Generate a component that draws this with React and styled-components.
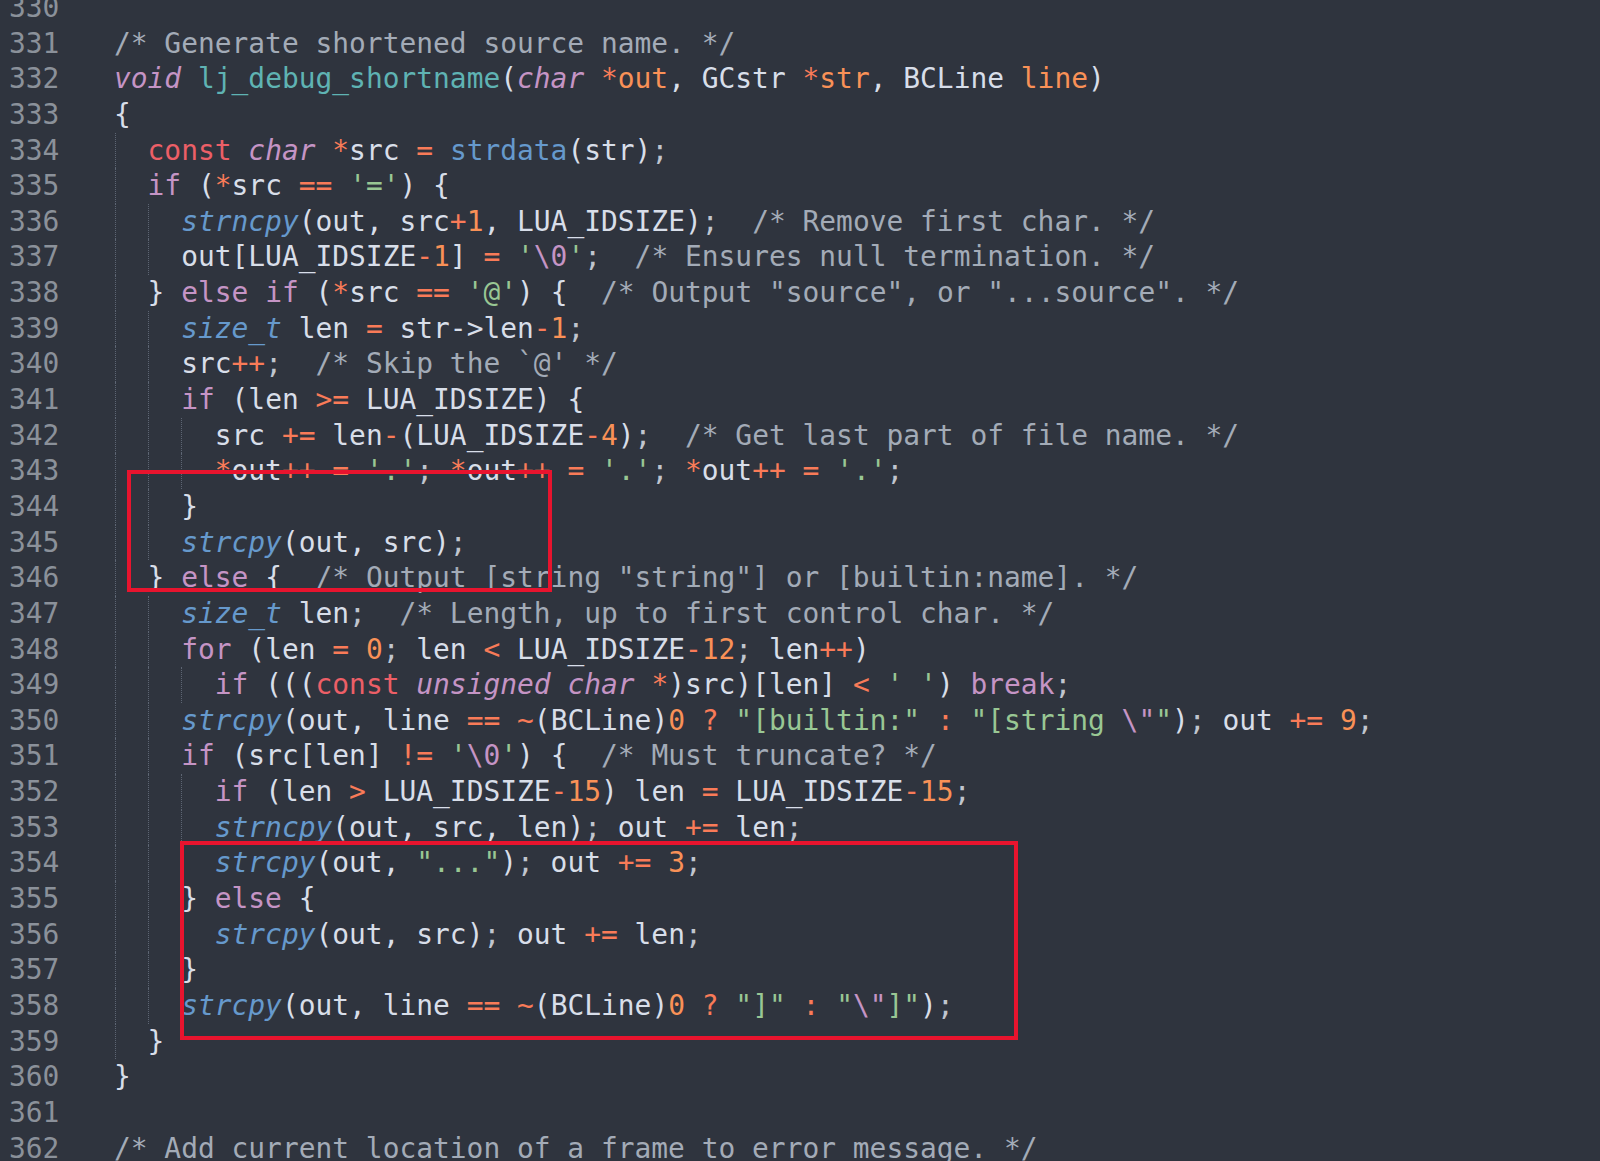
import React from 'react';
import styled, { createGlobalStyle } from 'styled-components';

const LH = 35.65;

const Global = createGlobalStyle`
  html, body { margin: 0; padding: 0; background: #2f343e; overflow: hidden; height: 100%; }
  #root { height: 100%; }
`;

const Page = styled.div`
  position: relative;
  width: 1600px;
  height: 1161px;
  overflow: hidden;
  background: #2f343e;
  font-family: "DejaVu Sans Mono", monospace;
  font-size: 27.9px;
`;

const Lines = styled.div`
  display: flex;
  flex-direction: column;
  margin-top: -10px;
`;

const Row = styled.div`
  display: flex;
  height: ${LH}px;
  line-height: ${LH}px;
`;

const Gutter = styled.div`
  flex: 0 0 114px;
  box-sizing: border-box;
  padding-left: 9px;
  color: #8b919a;
`;

const Code = styled.div`
  white-space: pre;
  color: #d8dee9;
`;

const Indent = styled.span`
  display: inline-block;
  vertical-align: top;
  box-sizing: border-box;
  width: 2ch;
  height: ${LH}px;
  border-left: 1px dotted #5d6573;
  margin-left: ${p => (p.$first ? '1px' : '0')};
  margin-right: ${p => (p.$first ? '-1px' : '0')};
`;

const COLORS = {
  comment: '#a3abb7',
  storage: '#ec5f67',
  type: '#c594c5',
  keyword: '#c594c5',
  support: '#6699cc',
  supportFn: '#6699cc',
  fn: '#6699cc',
  entity: '#5fb3b3',
  param: '#f99157',
  op: '#f97b58',
  num: '#f99157',
  str: '#99c794',
  esc: '#c594c5',
  semi: '#c0c5ce',
  plain: '#d8dee9',
};
const ITALIC = { type: true, support: true, supportFn: true };

const Tok = styled.span`
  color: ${p => COLORS[p.$k] || COLORS.plain};
  font-style: ${p => (ITALIC[p.$k] ? 'italic' : 'normal')};
`;

const Highlight = styled.div`
  position: absolute;
  box-sizing: border-box;
  border: 4px solid #e8142e;
  pointer-events: none;
`;

const SOURCE = [
  '',
  '/* Generate shortened source name. */',
  'void lj_debug_shortname(char *out, GCstr *str, BCLine line)',
  '{',
  '  const char *src = strdata(str);',
  "  if (*src == '=') {",
  '    strncpy(out, src+1, LUA_IDSIZE);  /* Remove first char. */',
  "    out[LUA_IDSIZE-1] = '\\0';  /* Ensures null termination. */",
  "  } else if (*src == '@') {  /* Output \"source\", or \"...source\". */",
  '    size_t len = str->len-1;',
  "    src++;  /* Skip the `@' */",
  '    if (len >= LUA_IDSIZE) {',
  '      src += len-(LUA_IDSIZE-4);  /* Get last part of file name. */',
  "      *out++ = '.'; *out++ = '.'; *out++ = '.';",
  '    }',
  '    strcpy(out, src);',
  '  } else {  /* Output [string "string"] or [builtin:name]. */',
  '    size_t len;  /* Length, up to first control char. */',
  '    for (len = 0; len < LUA_IDSIZE-12; len++)',
  "      if (((const unsigned char *)src)[len] < ' ') break;",
  '    strcpy(out, line == ~(BCLine)0 ? "[builtin:" : "[string \\""); out += 9;',
  "    if (src[len] != '\\0') {  /* Must truncate? */",
  '      if (len > LUA_IDSIZE-15) len = LUA_IDSIZE-15;',
  '      strncpy(out, src, len); out += len;',
  '      strcpy(out, "..."); out += 3;',
  '    } else {',
  '      strcpy(out, src); out += len;',
  '    }',
  '    strcpy(out, line == ~(BCLine)0 ? "]" : "\\"]");',
  '  }',
  '}',
  '',
  '/* Add current location of a frame to error message. */',
];

const FIRST = 330;

const IDENT = {
  const: 'storage',
  void: 'type',
  char: 'type',
  unsigned: 'type',
  if: 'keyword',
  else: 'keyword',
  for: 'keyword',
  break: 'keyword',
  size_t: 'support',
  strncpy: 'supportFn',
  strcpy: 'supportFn',
  strdata: 'fn',
};

const RE = /(\/\*.*?\*\/)|("(?:\\.|[^"\\])*")|('(?:\\.|[^'\\])*')|(\d+)|([A-Za-z_]\w*)|(->)|(\+\+|\+=|==|!=|>=|<=|[-+*=<>~?:!])|([;,])|(\s+)|(.)/g;

function splitString(s, out) {
  const parts = s.split(/(\\.)/);
  parts.forEach(p => {
    if (!p) return;
    out.push([p.startsWith('\\') && p.length === 2 ? 'esc' : 'str', p]);
  });
}

function tokenize(text, lineNo) {
  const out = [];
  let m;
  RE.lastIndex = 0;
  while ((m = RE.exec(text))) {
    if (m[1]) out.push(['comment', m[1]]);
    else if (m[2]) splitString(m[2], out);
    else if (m[3]) splitString(m[3], out);
    else if (m[4]) out.push(['num', m[4]]);
    else if (m[5]) {
      let k = IDENT[m[5]] || 'plain';
      if (lineNo === 332) {
        if (m[5] === 'lj_debug_shortname') k = 'entity';
        if (['out', 'str', 'line'].includes(m[5])) k = 'param';
      }
      out.push([k, m[5]]);
    } else if (m[6]) out.push(['plain', m[6]]);
    else if (m[7]) out.push(['op', m[7]]);
    else if (m[8]) out.push([m[8] === ';' ? 'semi' : 'plain', m[8]]);
    else if (m[9]) out.push(['plain', m[9]]);
    else out.push(['plain', m[10]]);
  }
  return out;
}

function CodeLine({ text, lineNo }) {
  const lead = text.match(/^ */)[0].length;
  const levels = Math.floor(lead / 2);
  const rest = text.slice(levels * 2);
  const guides = [];
  for (let i = 0; i < levels; i++) guides.push(<Indent key={'g' + i} $first={i === 0} />);
  const toks = tokenize(rest, lineNo);
  return (
    <Code>
      {guides}
      {toks.map(([k, t], i) => (
        <Tok key={i} $k={k}>{t}</Tok>
      ))}
    </Code>
  );
}

export default function App() {
  return (
    <Page>
      <Global />
      <Lines>
        {SOURCE.map((line, i) => (
          <Row key={i}>
            <Gutter>{FIRST + i}</Gutter>
            <CodeLine text={line} lineNo={FIRST + i} />
          </Row>
        ))}
      </Lines>
      <Highlight style={{ left: 126.5, top: 469.5, width: 425, height: 122 }} />
      <Highlight style={{ left: 179.5, top: 841, width: 838.5, height: 199 }} />
    </Page>
  );
}
